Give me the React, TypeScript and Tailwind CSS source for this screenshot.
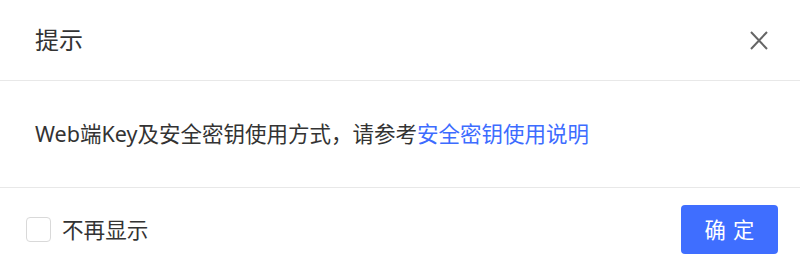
import React from "react";

export default function App() {
  return (
    <div
      className="w-[800px] h-[265px] bg-white overflow-hidden flex flex-col"
      style={{ fontFamily: '"Noto Sans", "Noto Sans CJK SC", sans-serif' }}
    >
      <div className="h-[81px] shrink-0 border-b border-[#e8e8e8] flex items-center justify-between pl-[35px] pr-[31px]">
        <div className="text-[24px] leading-[32px] text-[#333333]">提示</div>
        <button className="w-[20px] h-[20px] flex items-center justify-center text-[#666666]">
          <svg width="18" height="19" viewBox="0 0 18 19" fill="none">
            <path d="M1 1 L17 18 M17 1 L1 18" stroke="#666666" strokeWidth="2" strokeLinecap="butt" />
          </svg>
        </button>
      </div>
      <div className="h-[107px] shrink-0 border-b border-[#e8e8e8] flex items-center pl-[35px]">
        <p className="text-[21.5px] leading-[30px] text-[#333333] whitespace-nowrap">
          Web端Key及安全密钥使用方式，请参考
          <a className="text-[#3d6cff]">安全密钥使用说明</a>
        </p>
      </div>
      <div className="flex-1 flex items-start justify-between pl-[26px] pr-[22px] pt-[17px]">
        <label className="flex items-center h-[49px]">
          <span className="w-[25px] h-[25px] rounded-[4px] border border-[#d9d9d9] bg-white" />
          <span className="ml-[11px] text-[21.6px] leading-[30px] text-[#333333]">不再显示</span>
        </label>
        <button className="w-[97px] h-[49px] rounded-[4px] bg-[#3f6eff] text-white text-[21.3px] leading-[30px] flex items-center justify-center">
          <span className="tracking-[0.34em] mr-[-0.34em]">确定</span>
        </button>
      </div>
    </div>
  );
}
